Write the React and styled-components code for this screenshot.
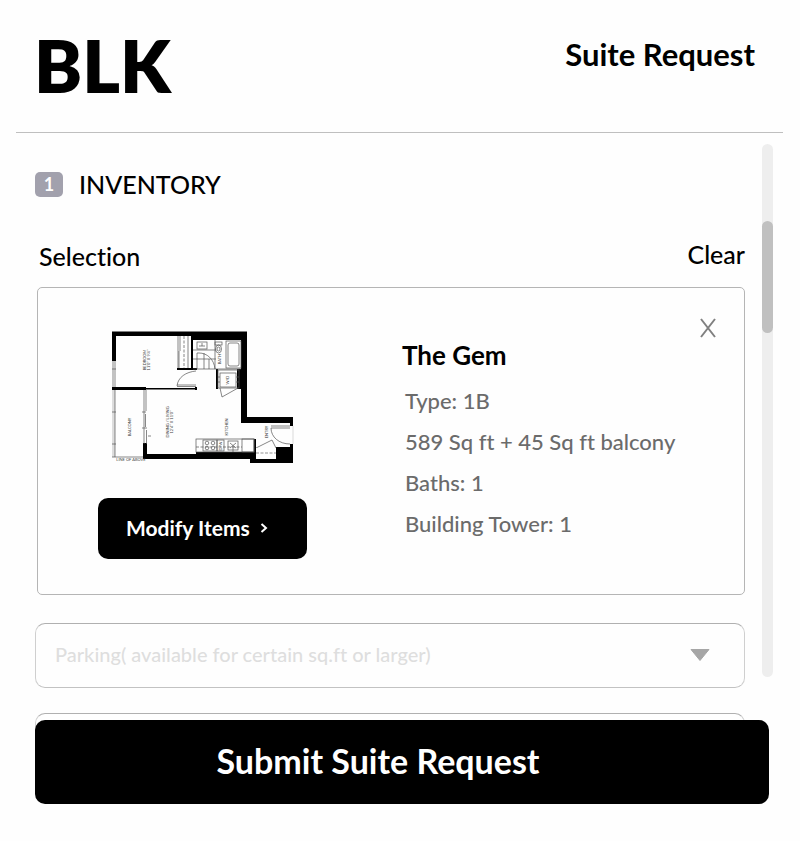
import React, { useState } from 'react';
import styled, { createGlobalStyle } from 'styled-components';

const details = [
  'Type: 1B',
  '589 Sq ft + 45 Sq ft balcony',
  'Baths: 1',
  'Building Tower: 1',
];

const FloorPlan = () => (
  <Plan viewBox="0 0 183 132" role="img" aria-label="Floor plan of The Gem">
    {/* balcony rail */}
    <rect x="1" y="59" width="3" height="67" fill="#ddd" />
    {/* outer walls */}
    <g fill="#000">
      <rect x="1" y="0.5" width="135" height="4.5" />
      <rect x="80" y="1" width="56" height="8" />
      <rect x="1" y="1" width="4" height="29" />
      <rect x="1" y="56" width="34" height="3" />
      <rect x="35" y="57" width="50" height="1.5" />
      <rect x="84" y="56" width="2" height="3" />
      <rect x="80" y="5" width="2" height="34" />
      <rect x="66" y="37" width="20" height="2" />
      <rect x="130" y="1" width="6" height="91" />
      <rect x="126" y="38" width="5" height="20" />
      <rect x="105" y="38" width="2" height="20" />
      <rect x="130" y="86" width="52" height="6" />
      <rect x="179" y="86" width="3" height="9" />
      <rect x="179" y="113" width="3" height="4" />
      <rect x="32" y="112" width="4" height="16" />
      <rect x="32" y="123" width="113" height="5" />
      <rect x="85" y="121" width="60" height="5" />
      <rect x="139" y="121" width="6" height="11" />
      <rect x="139" y="128" width="43" height="4" />
      <rect x="165" y="116" width="17" height="16" />
      <rect x="143" y="108" width="2" height="16" />
    </g>
    {/* windows, closets and fixtures */}
    <g fill="none" stroke="#555" strokeWidth="0.7">
      <path d="M2 30V56M4 30V56M1 38H5" />
      <path d="M67 5V37M69 5V20M68 20V37M77 5V37" />
      <path d="M73 5V37" strokeDasharray="3 1.5" />
      <path d="M66 54H85M66 55.5H85" />
      <path d="M1 126H32M1 81H5M1 113H5M4 59V126" />
      <path d="M33 59V113M35 59V80M34.5 83V96M35.5 99V113M31 81H35M31 97H36M37 105H40" />
      <rect x="115" y="10" width="15" height="27" />
      <rect x="117" y="12" width="11" height="23" rx="2" />
      <rect x="86" y="11" width="10" height="7" />
      <path d="M91 12V15M88 15H94M82 19H105M82 28H105M93 22V38M98 28V38M104 9V38M82 38H130" />
      <path d="M86 38V22H88C96 22 103 28 104 38" />
      <rect x="104" y="11" width="7" height="3" />
      <ellipse cx="107.5" cy="18" rx="3" ry="4" />
      <ellipse cx="107.5" cy="18" rx="1.5" ry="2" />
      <rect x="107" y="39" width="21" height="18" />
      <rect x="109" y="42" width="16" height="14" />
      <path d="M107 46H109M107 51H109M125 46H128M125 51H128" />
      <path d="M109 57L111 66L127 57" />
      <rect x="85" y="108" width="58" height="13" />
      <path d="M85 116H131" strokeDasharray="3 1.5" />
      <rect x="92" y="109" width="14" height="11" />
      <circle cx="96" cy="112" r="1.8" />
      <circle cx="102" cy="112" r="1.8" />
      <circle cx="96" cy="117" r="1.8" />
      <circle cx="102" cy="117" r="1.8" />
      <rect x="106" y="109" width="7" height="11" />
      <rect x="117" y="110" width="10" height="9" />
      <path d="M119 112L125 117M125 112L119 117M122 115V121" />
      <rect x="131" y="108" width="12" height="13" />
      <path d="M145 117L161 109L165 117" />
      <path d="M160 95H179M160 97H179M160 97C160 106 168 113 179 113" />
      <path d="M85 40C75 41 67 46 66 55" />
      <path d="M182 95V113" stroke="#ccc" />
    </g>
    <rect x="145" y="117" width="20" height="10" fill="#fff" />
    <path d="M145 122H165" stroke="#666" strokeWidth="0.7" strokeDasharray="3 1.5" />
    {/* room names */}
    <PlanText>
      <text transform="translate(35 29) rotate(-90)">BEDROOM</text>
      <text transform="translate(39 29) rotate(-90)">11'0" X 9'4"</text>
      <text transform="translate(58 91) rotate(-90)">DINING / LIVING</text>
      <text transform="translate(62 91) rotate(-90)">12'4" X 11'0"</text>
      <text transform="translate(20 96) rotate(-90)">BALCONY</text>
      <text transform="translate(117 96) rotate(-90)">KITCHEN</text>
      <text transform="translate(157 101) rotate(-90)">ENTRY</text>
      <text transform="translate(110 28) rotate(-90)">BATH</text>
      <text transform="translate(118 49) rotate(-90)">W/D</text>
      <text transform="translate(111 115) rotate(-90)">D/W</text>
      <text x="20" y="130">LINE OF ABOVE</text>
    </PlanText>
  </Plan>
);

const App = () => {
  const [parking, setParking] = useState('');

  return (
    <>
      <GlobalStyle />
      <Header>
        <Logo>BLK</Logo>
        <PageTitle>Suite Request</PageTitle>
      </Header>
      <Body>
        <Content>
          <SectionTitle>
            <Step>1</Step>
            INVENTORY
          </SectionTitle>
          <SelectionBar>
            <h3>Selection</h3>
            <ClearButton type="button">Clear</ClearButton>
          </SelectionBar>
          <Card>
            <Preview>
              <FloorPlan />
              <ModifyButton type="button">
                Modify Items
                <svg width="8" height="10" viewBox="0 0 8 10" aria-hidden="true">
                  <path d="M1.5 1L6 5L1.5 9" fill="none" stroke="#fff" strokeWidth="2" />
                </svg>
              </ModifyButton>
            </Preview>
            <Info>
              <SuiteName>The Gem</SuiteName>
              <DetailList>
                {details.map((detail) => (
                  <li key={detail}>{detail}</li>
                ))}
              </DetailList>
            </Info>
            <CloseButton type="button" aria-label="Remove">
              <svg width="16" height="20" viewBox="0 0 16 20" aria-hidden="true">
                <path d="M1 1L15 19M15 1L1 19" fill="none" stroke="#808080" strokeWidth="2" />
              </svg>
            </CloseButton>
          </Card>
          <Field>
            <Select
              aria-label="Parking"
              value={parking}
              onChange={(e) => setParking(e.target.value)}
            >
              <option value="">Parking( available for certain sq.ft or larger)</option>
            </Select>
            <Arrow width="20" height="12" viewBox="0 0 20 12" aria-hidden="true">
              <path d="M1 0.5H19L10 11.5Z" fill="#a6a6a6" stroke="#a6a6a6" strokeLinejoin="round" />
            </Arrow>
          </Field>
          <Field>
            <Select aria-label="Storage" />
          </Field>
        </Content>
        <ScrollTrack>
          <ScrollThumb />
        </ScrollTrack>
      </Body>
      <Footer>
        <SubmitButton type="submit">Submit Suite Request</SubmitButton>
      </Footer>
    </>
  );
};

export default App;

const GlobalStyle = createGlobalStyle`
  * {
    box-sizing: border-box;
  }

  body {
    margin: 0;
    background-color: #fefefe;
    color: #000;
    font-family: Lato, "Liberation Sans", sans-serif;
    font-variant-ligatures: none;
  }

  h1, h2, h3, p, ul {
    margin: 0;
    padding: 0;
    font-weight: 500;
  }

  button, select {
    font-family: inherit;
    font-variant-ligatures: inherit;
  }

  button {
    border: none;
    padding: 0;
    cursor: pointer;
  }
`;

// header
const Header = styled.header`
  display: flex;
  justify-content: space-between;
  align-items: flex-start;
  margin: 0 17px 0 16px;
  padding: 29px 28px 31px 18px;
  border-bottom: 1px solid #bfbfbf;
`;

const Logo = styled.div`
  font-size: 72px;
  line-height: 72px;
  font-weight: 800;
`;

const PageTitle = styled.h1`
  font-size: 31px;
  line-height: 50px;
  font-weight: 700;
`;

// body
const Body = styled.main`
  display: flex;
  gap: 17px;
  padding: 11px 27px 0 35px;
`;

const Content = styled.div`
  flex: 1;
  min-width: 0;
`;

const SectionTitle = styled.h2`
  display: flex;
  align-items: center;
  gap: 16px;
  margin-top: 24px;
  font-size: 25px;
  line-height: 32px;
`;

const Step = styled.span`
  width: 28px;
  border-radius: 5px;
  background-color: #a2a1ad;
  color: #fff;
  font-size: 18px;
  line-height: 25px;
  font-weight: 700;
  text-align: center;
`;

const SelectionBar = styled.div`
  display: flex;
  justify-content: space-between;
  align-items: center;
  margin: 40px 0 15px 4px;

  h3 {
    font-size: 25px;
    line-height: 32px;
  }
`;

const ClearButton = styled.button`
  padding-bottom: 4px;
  background: none;
  font-size: 25px;
  line-height: 28px;
  font-weight: 500;
`;

// selected suite
const Card = styled.section`
  display: flex;
  margin-left: 2px;
  padding: 43px 28px 35px 60px;
  border: 1px solid #b5b5b5;
  border-radius: 5px;
`;

const Preview = styled.div`
  display: flex;
  flex-direction: column;
  gap: 35px;
`;

const Plan = styled.svg`
  width: 183px;
  height: 132px;
  margin-left: 13px;
`;

const PlanText = styled.g`
  fill: #444;
  font-size: 4px;
  text-anchor: middle;
`;

const ModifyButton = styled.button`
  display: flex;
  align-items: center;
  gap: 10px;
  width: 209px;
  height: 61px;
  padding: 0 0 2px 28px;
  border-radius: 10px;
  background-color: #000;
  color: #fff;
  font-size: 21px;
  font-weight: 700;
`;

const Info = styled.div`
  flex: 1;
  margin-left: 95px;
  padding-top: 8px;
`;

const SuiteName = styled.h3`
  font-size: 26px;
  line-height: 32px;
  font-weight: 700;
`;

const DetailList = styled.ul`
  margin: 9px 0 0 3px;
  color: #6b6b6b;
  font-size: 22px;
  line-height: 41px;
  list-style: none;
`;

const CloseButton = styled.button`
  align-self: flex-start;
  height: 20px;
  margin-top: -13px;
  background: none;
`;

// drop-downs
const Field = styled.div`
  position: relative;
  margin-top: 28px;

  & + & {
    margin-top: 25px;
  }
`;

const Select = styled.select`
  display: block;
  width: 100%;
  height: 65px;
  padding: 0 60px 4px 19px;
  appearance: none;
  border: 1px solid;
  border-color: #b0b0b0 #cfcfcf #c2c2c2;
  border-radius: 10px;
  background-color: transparent;
  color: #dedede;
  font-size: 20px;
  font-weight: 500;
`;

const Arrow = styled.svg`
  position: absolute;
  top: 26px;
  right: 35px;
  pointer-events: none;
`;

// scroll bar
const ScrollTrack = styled.div`
  display: grid;
  grid-template-rows: 77fr 112fr 344fr;
  width: 11px;
  margin-bottom: 101px;
  border-radius: 6px;
  background-color: #eee;
`;

const ScrollThumb = styled.div`
  grid-row: 2;
  border-radius: 6px;
  background-color: #c0c0c0;
`;

// the submit bar floats over the end of the list
const Footer = styled.footer`
  position: relative;
  margin-top: -58px;
  padding: 0 31px 37px 35px;
`;

const SubmitButton = styled.button`
  width: 100%;
  height: 84px;
  padding: 0 48px 4px 0;
  border-radius: 10px;
  background-color: #000;
  color: #fff;
  font-size: 34px;
  font-weight: 700;
`;
